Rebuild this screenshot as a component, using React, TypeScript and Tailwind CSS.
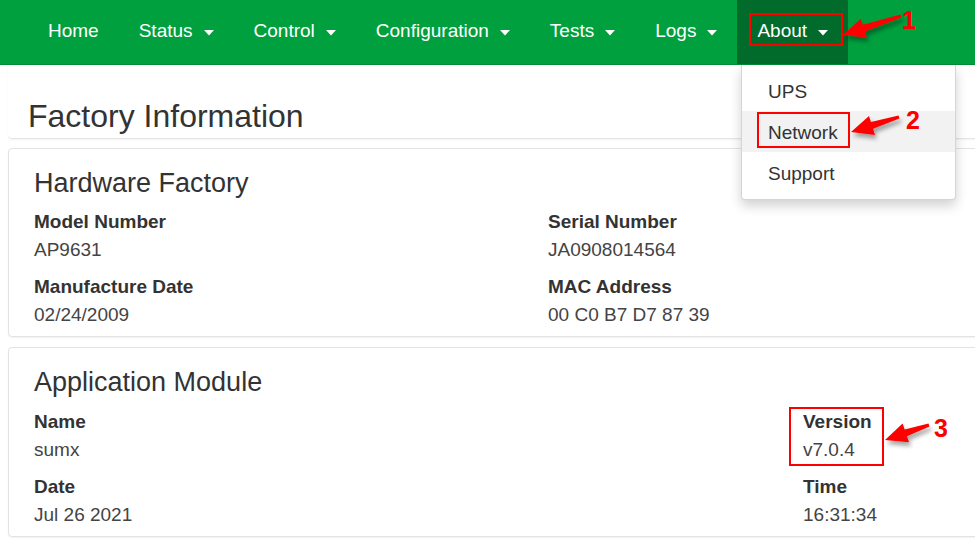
import React from 'react'

type Pt = [number, number]

const navItems = [
  { label: 'Home', caret: false },
  { label: 'Status', caret: true },
  { label: 'Control', caret: true },
  { label: 'Configuration', caret: true },
  { label: 'Tests', caret: true },
  { label: 'Logs', caret: true },
  { label: 'About', caret: true, active: true },
]

const Caret = () => (
  <svg width="10" height="6" viewBox="0 0 10 6" className="mt-[2px]">
    <path d="M0 0 L10 0 L5 5.5 Z" fill="#fff" />
  </svg>
)

// red callout arrow, tail -> tip
const arrowPoints = (tail: Pt, tip: Pt) => {
  const dx = tip[0] - tail[0]
  const dy = tip[1] - tail[1]
  const len = Math.hypot(dx, dy)
  const ux = dx / len
  const uy = dy / len
  const nx = -uy
  const ny = ux
  const headLen = 22
  const headW = 10
  const bx = tip[0] - ux * headLen
  const by = tip[1] - uy * headLen
  const pts: Pt[] = [
    [tail[0] + nx * 1.5, tail[1] + ny * 1.5],
    [bx + nx * 3.5, by + ny * 3.5],
    [bx + nx * headW, by + ny * headW],
    tip,
    [bx - nx * headW, by - ny * headW],
    [bx - nx * 3.5, by - ny * 3.5],
    [tail[0] - nx * 1.5, tail[1] - ny * 1.5],
  ]
  return pts.map((p) => p.join(',')).join(' ')
}

const Callout = ({ tail, tip, n, at }: { tail: Pt; tip: Pt; n: string; at: Pt }) => (
  <g>
    <polygon points={arrowPoints(tail, tip)} fill="#f00" filter="url(#shadow)" />
    <text
      x={at[0]}
      y={at[1]}
      fill="#f00"
      fontSize="25"
      fontWeight="bold"
      fontFamily="'Liberation Sans', Arial, sans-serif"
      textAnchor="middle"
    >
      {n}
    </text>
  </g>
)

const Field = ({ label, value }: { label: string; value: string }) => (
  <div>
    <div className="text-[19px] leading-[28px] font-bold text-[#333]">{label}</div>
    <div className="text-[19px] leading-[28px] text-[#444]">{value}</div>
  </div>
)

const Card = ({ title, className, children }: { title: string; className: string; children: React.ReactNode }) => (
  <div
    className={`-mr-4 rounded-[4px] border border-[#e3e3e3] bg-white pl-[25px] pt-[19px] shadow-[0_1px_2px_rgba(0,0,0,0.06)] ${className}`}
  >
    <h2 className="text-[27px] leading-[30px] text-[#333]">{title}</h2>
    {children}
  </div>
)

const App: React.FC = () => {
  return (
    <div className="relative h-[543px] w-[975px] overflow-hidden bg-white font-['Liberation_Sans',Arial,sans-serif]">
      {/* navbar */}
      <nav className="flex h-[65px] border-b border-[#008c35] bg-[#00a03e] pl-[28px]">
        {navItems.map((item) => (
          <div
            key={item.label}
            className={`flex items-center gap-[11px] px-[20px] pb-[1px] text-[19px] text-white ${
              item.active ? 'bg-[#006b2b]' : ''
            }`}
          >
            <span>{item.label}</span>
            {item.caret && <Caret />}
          </div>
        ))}
      </nav>

      <div className="flex flex-col px-2">
        <div className="-mr-4 rounded-b-[4px] border-b border-[#e6e6e6] pt-[32px] pb-[3px] pl-[20px] shadow-[0_1px_2px_rgba(0,0,0,0.05)]">
          <h1 className="text-[32px] leading-[38px] text-[#333]">Factory Information</h1>
        </div>

        <Card title="Hardware Factory" className="mt-[9px] pb-[7px]">
          <div className="mt-[10px] grid grid-cols-[514px_1fr] gap-y-[9px]">
            <Field label="Model Number" value="AP9631" />
            <Field label="Serial Number" value="JA0908014564" />
            <Field label="Manufacture Date" value="02/24/2009" />
            <Field label="MAC Address" value="00 C0 B7 D7 87 39" />
          </div>
        </Card>

        <Card title="Application Module" className="mt-[10px] pb-[7px]">
          <div className="mt-[11px] grid grid-cols-[769px_1fr] gap-y-[9px]">
            <Field label="Name" value="sumx" />
            <Field label="Version" value="v7.0.4" />
            <Field label="Date" value="Jul 26 2021" />
            <Field label="Time" value="16:31:34" />
          </div>
        </Card>
      </div>

      {/* About dropdown */}
      <div className="absolute left-[741px] top-[65px] w-[215px] rounded-b-[4px] border border-t-0 border-[#d5d5d5] bg-white pt-[5px] pb-[6px] shadow-[0_6px_12px_rgba(0,0,0,0.18)]">
        <div className="flex h-[41px] items-center pl-[26px] pt-[3px] text-[19px] text-[#333]">UPS</div>
        <div className="flex h-[41px] items-center bg-[#f2f2f2] pl-[26px] pt-[3px] text-[19px] text-[#333]">Network</div>
        <div className="flex h-[41px] items-center pl-[26px] pt-[3px] text-[19px] text-[#333]">Support</div>
      </div>

      {/* annotation boxes */}
      <div className="absolute left-[749px] top-[13px] h-[33px] w-[94px] border-2 border-[#f00]" />
      <div className="absolute left-[757px] top-[112px] h-[36px] w-[93px] border-2 border-[#f00]" />
      <div className="absolute left-[789px] top-[407px] h-[59px] w-[95px] border-2 border-[#f00]" />

      <svg className="pointer-events-none absolute inset-0" width="975" height="543">
        <defs>
          <filter id="shadow" x="-30%" y="-60%" width="160%" height="220%">
            <feDropShadow dx="2" dy="4" stdDeviation="2" floodColor="#000" floodOpacity="0.35" />
          </filter>
        </defs>
        <Callout tail={[901, 16]} tip={[843, 35]} n="1" at={[909, 29]} />
        <Callout tail={[899, 117]} tip={[851, 132]} n="2" at={[913, 129]} />
        <Callout tail={[929, 425]} tip={[885, 440]} n="3" at={[941, 437]} />
      </svg>
    </div>
  )
}

export default App
